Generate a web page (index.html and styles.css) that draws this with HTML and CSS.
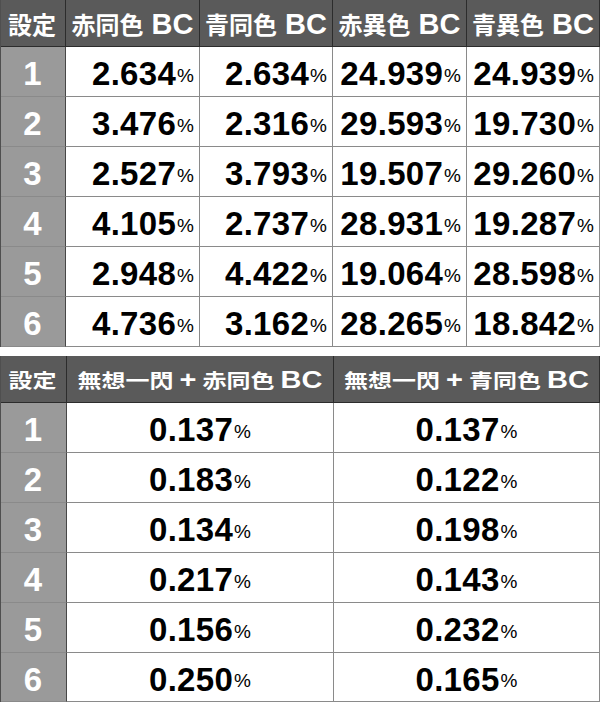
FILE: index.html
```html
<!DOCTYPE html>
<html lang="ja">
<head>
<meta charset="utf-8">
<link rel="stylesheet" href="styles.css">
</head>
<body>
<div class="grid g1">
  <div class="th lab"><span class="hd"><span class="j">設定</span></span></div>
  <div class="th"><span class="hd"><span class="j">赤同色</span> BC</span></div>
  <div class="th"><span class="hd"><span class="j">青同色</span> BC</span></div>
  <div class="th"><span class="hd"><span class="j">赤異色</span> BC</span></div>
  <div class="th"><span class="hd"><span class="j">青異色</span> BC</span></div>

  <div class="td lab">1</div><div class="td">2.634<span class="pc">%</span></div><div class="td">2.634<span class="pc">%</span></div><div class="td">24.939<span class="pc">%</span></div><div class="td">24.939<span class="pc">%</span></div>
  <div class="td lab">2</div><div class="td">3.476<span class="pc">%</span></div><div class="td">2.316<span class="pc">%</span></div><div class="td">29.593<span class="pc">%</span></div><div class="td">19.730<span class="pc">%</span></div>
  <div class="td lab">3</div><div class="td">2.527<span class="pc">%</span></div><div class="td">3.793<span class="pc">%</span></div><div class="td">19.507<span class="pc">%</span></div><div class="td">29.260<span class="pc">%</span></div>
  <div class="td lab">4</div><div class="td">4.105<span class="pc">%</span></div><div class="td">2.737<span class="pc">%</span></div><div class="td">28.931<span class="pc">%</span></div><div class="td">19.287<span class="pc">%</span></div>
  <div class="td lab">5</div><div class="td">2.948<span class="pc">%</span></div><div class="td">4.422<span class="pc">%</span></div><div class="td">19.064<span class="pc">%</span></div><div class="td">28.598<span class="pc">%</span></div>
  <div class="td lab">6</div><div class="td">4.736<span class="pc">%</span></div><div class="td">3.162<span class="pc">%</span></div><div class="td">28.265<span class="pc">%</span></div><div class="td">18.842<span class="pc">%</span></div>
</div>

<div class="grid g2">
  <div class="th lab"><span class="hd sq"><span class="j">設定</span></span></div>
  <div class="th"><span class="hd sq"><span class="j">無想一閃</span> + <span class="j">赤同色</span> BC</span></div>
  <div class="th"><span class="hd sq"><span class="j">無想一閃</span> + <span class="j">青同色</span> BC</span></div>

  <div class="td lab">1</div><div class="td">0.137<span class="pc">%</span></div><div class="td">0.137<span class="pc">%</span></div>
  <div class="td lab">2</div><div class="td">0.183<span class="pc">%</span></div><div class="td">0.122<span class="pc">%</span></div>
  <div class="td lab">3</div><div class="td">0.134<span class="pc">%</span></div><div class="td">0.198<span class="pc">%</span></div>
  <div class="td lab">4</div><div class="td">0.217<span class="pc">%</span></div><div class="td">0.143<span class="pc">%</span></div>
  <div class="td lab">5</div><div class="td">0.156<span class="pc">%</span></div><div class="td">0.232<span class="pc">%</span></div>
  <div class="td lab">6</div><div class="td">0.250<span class="pc">%</span></div><div class="td">0.165<span class="pc">%</span></div>
</div>
</body>
</html>
```
FILE: styles.css
```css
html, body {
  margin: 0;
  padding: 0;
  background: #ffffff;
}
body {
  font-family: "Liberation Sans", Arial, "Noto Sans CJK JP", sans-serif;
  width: 600px;
}
.grid {
  display: grid;
  width: 600px;
  box-sizing: border-box;
  border-left: 1px solid #4f4f4f;
}
.g1 {
  grid-template-columns: 65px 134px 133px 134px 133px;
  grid-template-rows: 47px repeat(6, 50px);
}
.g2 {
  margin-top: 9px;
  grid-template-columns: 66px 267px 266px;
  grid-template-rows: 47px repeat(5, 50px) 49px;
}
.th, .td {
  box-sizing: border-box;
  display: flex;
  align-items: center;
  white-space: nowrap;
  overflow: hidden;
}
.th {
  background: #5a5a5a;
  color: #ffffff;
  justify-content: center;
  font-weight: 700;
  font-size: 29px;
  border-right: 1px solid #2c2c2c;
  border-bottom: 1px solid #2c2c2c;
  padding-top: 1px;
}
.hd {
  display: inline-block;
}
.th .j {
  font-family: "Noto Sans CJK JP", sans-serif;
  font-size: 24px;
  font-weight: 700;
}
.th.lab {
  padding-right: 2px;
}
.sq {
  transform: scaleY(0.8);
  word-spacing: -2px;
}
.td {
  color: #000000;
  font-weight: 700;
  font-size: 33px;
  letter-spacing: 0.3px;
  border-right: 1px solid #8a8a8a;
  border-bottom: 1px solid #8a8a8a;
  padding-top: 5px;
}
.td.lab {
  background: #9a9a9a;
  color: #ffffff;
  justify-content: center;
  border-right-color: #474747;
  letter-spacing: 0;
  padding-right: 1px;
}
.g1 .td:not(.lab) {
  justify-content: flex-end;
  padding-right: 5px;
}
.g2 .td:not(.lab) {
  justify-content: center;
}
.pc {
  font-size: 19px;
  font-weight: 400;
  letter-spacing: 0;
  margin-left: 1px;
  align-self: flex-end;
  margin-bottom: 9px;
}
```
